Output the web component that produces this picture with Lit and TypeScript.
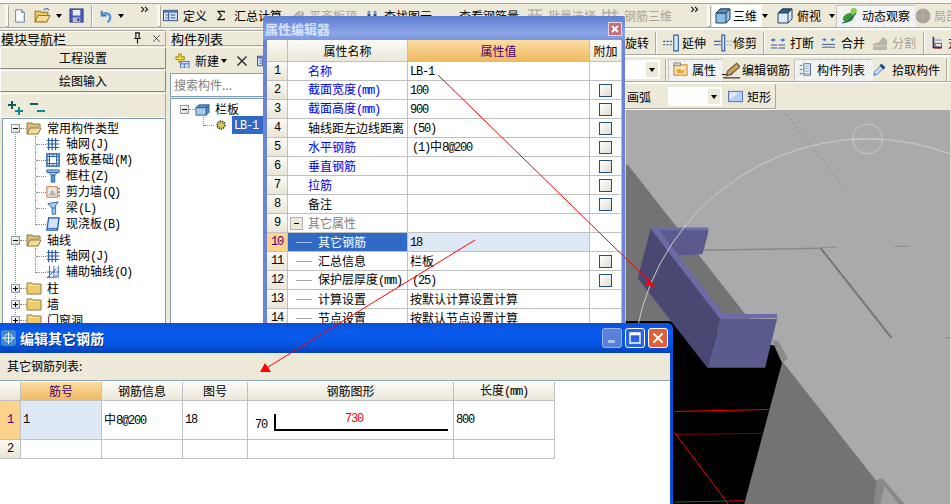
import { LitElement, html, css, svg } from 'lit';
import { customElement } from 'lit/decorators.js';

// icon drawings, 16x16 box unless stated
const paths: Record<string, unknown> = {
  doc: svg`<path d="M3 1h7l3 3v11H3z" fill="#fff" stroke="#5d7397"/><path d="M10 1v3h3" fill="#cfd8e6" stroke="#5d7397"/><path d="M4 14h8V7" stroke="#c4d0e2" fill="none"/>`,
  open: svg`<path d="M1 14V4h5l1 1h6v3" fill="#e8c468" stroke="#9c7a2c"/><path d="M1 14l3-6h11l-3 6z" fill="#f6dd96" stroke="#9c7a2c"/><path d="M9 3c2-2 4-2 5 0" stroke="#3a6cc0" fill="none"/>`,
  save: svg`<rect x="1" y="1" width="14" height="14" fill="#4a5fb8" stroke="#2b3a80"/><rect x="4" y="2" width="8" height="6" fill="#e8ecf8"/><rect x="4" y="10" width="8" height="5" fill="#b8bcc8"/><rect x="9" y="11" width="2" height="3" fill="#2b3a80"/>`,
  undo: svg`<path d="M4 3v5h5" fill="none" stroke="#2f72c8" stroke-width="2"/><path d="M4 8c3-4 9-3 9 2 0 2-1 4-3 5" fill="none" stroke="#4a90dc" stroke-width="2.4"/>`,
  table: svg`<rect x=".5" y="2.5" width="15" height="11" fill="#cfe0f5" stroke="#34507c"/><rect x="1" y="3" width="14" height="2" fill="#4a74b8"/><path d="M6 5v8M3 7.5h2M3 10.5h2M8 7.5h5M8 10.5h5" stroke="#34507c"/>`,
  sigma: svg`<path d="M12 4V2H3l5 6-5 6h9v-2" fill="none" stroke="#111" stroke-width="1.8"/>`,
  grayTag: svg`<path d="M2 11l7-7h5v5l-7 7z" fill="#bdb9aa" stroke="#9d998a"/><circle cx="12" cy="5" r="1" fill="#ece9d8"/>`,
  binoculars: svg`<path d="M2 14l1-9h3l1 9zM9 14l1-9h3l1 9z" fill="#2c4f90"/><rect x="7" y="8" width="2" height="3" fill="#2c4f90"/><rect x="3" y="2" width="3" height="3" fill="#7a94c0"/><rect x="10" y="2" width="3" height="3" fill="#7a94c0"/>`,
  glasses: svg`<path d="M1 13l3-4M15 13l-3-4" stroke="#444" fill="none"/><circle cx="5" cy="11" r="2" fill="none" stroke="#444"/><circle cx="11" cy="11" r="2" fill="none" stroke="#444"/>`,
  batch: svg`<path d="M1 2h14M1 7h14M5 2v13M10 2v7" stroke="#b4b1a4" fill="none" stroke-width="1.5"/><path d="M9 9l6 3-6 3z" fill="#c4c1b4"/>`,
  rebar: svg`<path d="M2 2v13M7 2v13M12 2v13M2 5h13M2 10h13" stroke="#b4b1a4" fill="none" stroke-width="1.5"/>`,
  cube: svg`<path d="M1 5l4-4h10v10l-4 4H1z" fill="#8cc0e4" stroke="#23405f"/><path d="M1 5h10v10M11 5l4-4" fill="none" stroke="#23405f"/><path d="M1 5l4-4h10l-4 4z" fill="#5d8fbc" stroke="#23405f"/>`,
  topCube: svg`<path d="M1 5l4-4h10v10l-4 4H1z" fill="#dbeaf5" stroke="#23405f"/><path d="M1 5l4-4h10l-4 4z" fill="#2a5f92" stroke="#23405f"/><path d="M11 5v10M11 5l4-4" fill="none" stroke="#23405f"/>`,
  orbit: svg`<ellipse cx="7" cy="10" rx="5.5" ry="4" fill="#3d9a30" transform="rotate(-30 7 10)"/><circle cx="12" cy="4" r="3" fill="#8ad040"/><path d="M1 15c4 0 9-4 13-9" stroke="#1a5c7a" fill="none"/>`,
  local: svg`<circle cx="8" cy="8" r="7.5" fill="#a8a598"/><path d="M8 1v14M1 8h14" stroke="#c4c1b4" stroke-dasharray="2 2"/>`,
  extend: svg`<path d="M10.5 1h4v14h-4z" stroke="#2c5fa8" fill="#dce8f8"/><path d="M1 6.5h8M1 9.5h8" stroke="#2c5fa8" stroke-dasharray="2 1"/>`,
  trim: svg`<path d="M7 1h2.5v14H7z" stroke="#2c5fa8" fill="#dce8f8"/><path d="M0 6.5h6M0 9.5h6" stroke="#2c5fa8"/><path d="M11 6.5h5M11 9.5h5" stroke="#9cb8dc" stroke-dasharray="2 1"/>`,
  breakIco: svg`<path d="M1 5l3-2v4zM15 5l-3-2v4z" fill="#3a78c8"/><path d="M1 5h5M10 5h5" stroke="#3a78c8"/><path d="M1 10h14M1 13h14" stroke="#3a5a90"/><path d="M8 9v5" stroke="#fff"/>`,
  merge: svg`<path d="M6 5L3 3v4zM10 5l3-2v4z" fill="#3a78c8"/><path d="M1 5h4M11 5h4" stroke="#3a78c8"/><path d="M1 10h14M1 13h14" stroke="#3a5a90"/>`,
  split: svg`<path d="M1 15V9l6-2 4-5 4 3v10z" fill="#b8b5a8"/><path d="M1 11h14" stroke="#d8d5c8"/>`,
  nextIco: svg`<path d="M3 1v13h10" stroke="#1a2f80" fill="none" stroke-width="2"/><path d="M5 5h8" stroke="#2c7fc8"/><rect x="5" y="9" width="8" height="6" fill="none" stroke="#b02020"/>`,
  props: svg`<rect x="1" y="3" width="14" height="11" fill="#fbe3b0" stroke="#c07a20"/><rect x="1" y="1" width="7" height="3" fill="#d8d4c0" stroke="#888"/><path d="M3 9l4-2 3 2 3-1-2 4H5z" fill="#e8a840"/>`,
  pencil: svg`<path d="M0 12h9" stroke="#222"/><path d="M4 13l1-4 8-7 3 3-8 7z" fill="#d8a050" stroke="#555"/><path d="M1 15h15" stroke="#222"/>`,
  list: svg`<rect x="6" y="1" width="8" height="14" fill="#fff" stroke="#34507c"/><path d="M7 4h6M7 7h6M7 10h6M7 13h6" stroke="#5d84c0"/><path d="M1 3h3M1 8h3M1 13h3" stroke="#34507c" stroke-width="2" stroke-dasharray="1 1"/>`,
  dropper: svg`<path d="M1 15l1-4 7-7 3 3-7 7z" fill="#cfe4f8" stroke="#2c5fa8"/><path d="M8 3l2-2 2 1 2 2 1 2-2 2z" fill="#1e4a9c"/>`,
  rect: svg`<rect x=".5" y="2.5" width="15" height="11" fill="#b8d0f4" stroke="#4a74b8"/><path d="M2 4h9L2 11z" fill="#e4eefc"/>`,
  newPlus: svg`<path d="M1 4h3V1h3v3h3v3H7v3H4V7H1z" fill="#f0d040" stroke="#a08820"/><rect x="6" y="9" width="9" height="7" fill="#cfdff5" stroke="#4a74b8"/><path d="M6 11.5h9M10 11.5v4" stroke="#4a74b8"/>`,
  cross: svg`<path d="M2 2l12 12M14 2L2 14" stroke="#333" stroke-width="2"/>`,
  plusPlus: svg`<path d="M4 1v8M0 5h8" stroke="#0d5e5e" stroke-width="2"/><path d="M11 7v8M7 11h8" stroke="#0d8a8a" stroke-width="2"/>`,
  minusMinus: svg`<path d="M0 4h8" stroke="#0d5e5e" stroke-width="2"/><path d="M7 11h8" stroke="#0d8a8a" stroke-width="2"/>`,
  folderOpen: svg`<path d="M1 14V3h5l1 1h7v3" fill="#d8bc78" stroke="#8a7850"/><path d="M1 14l3-6h11l-3 6z" fill="#f8dc98" stroke="#8a7850"/>`,
  folder: svg`<path d="M1 14V3h5l1 1h8v10z" fill="#f8dc80" stroke="#8a7850"/><path d="M2 6h12v7H2z" fill="#f0cc68"/>`,
  box3d: svg`<path d="M1 6h11v8H1z" fill="#a8cce8" stroke="#33608c"/><path d="M1 6l3-3h11l-3 3zM12 6l3-3v8l-3 3z" fill="#5d8fbc" stroke="#33608c"/>`,
  gear: svg`<circle cx="8" cy="8" r="5" fill="#f8e020" stroke="#444" stroke-width="2.4" stroke-dasharray="2 1"/><circle cx="8" cy="8" r="2" fill="#fff8a0" stroke="#886"/>`,
  grid: svg`<path d="M3 1v14M7 1v14M11 1v14M1 4h14M1 8h14M1 12h14" stroke="#2a5cb0" stroke-width="1.4"/>`,
  raft: svg`<rect x="1" y="1" width="14" height="14" fill="#dbe8f8" stroke="#1e5aa8" stroke-width="1.5"/><rect x="4" y="4" width="8" height="8" fill="#fff" stroke="#1e5aa8"/><path d="M1 4h3M1 8h3M1 12h3M12 4h3M12 8h3M12 12h3M4 1v3M8 1v3M12 1v3M4 12v3M8 12v3M12 12v3" stroke="#1e5aa8"/>`,
  column: svg`<path d="M1 1h14v3H1z" fill="#9cbce4" stroke="#1e5aa8"/><path d="M3 4h10L10 7H6z" fill="#c8dcf4" stroke="#1e5aa8"/><path d="M6 7h4v8H6z" fill="#5d8fd4" stroke="#1e5aa8"/>`,
  wall: svg`<rect x="1" y="2" width="12" height="12" fill="#ece8e0" stroke="#c86a30"/><path d="M3 12l4-7 5 7z" fill="#b8b4ac"/><path d="M15 3v2M15 7v2M15 11v2" stroke="#c86a30" stroke-width="2"/>`,
  beam: svg`<path d="M2 3l12-2-3 4v10H7V8z" fill="#a8ccf0" stroke="#1e5aa8"/><path d="M7 8h4" stroke="#1e5aa8"/>`,
  slab: svg`<path d="M3 1h12l-2 14H1z" fill="#cfe2f8" stroke="#1e5aa8" stroke-width="1.5"/><path d="M2 13h11" stroke="#1e5aa8"/>`,
  aux: svg`<path d="M4 1v14M9 1v14M14 1v14M1 8h14M1 14h14" stroke="#2a5cb0"/><path d="M1 15L12 4" stroke="#2a5cb0"/><rect x="10" y="11" width="5" height="4" fill="#9ab"/>`,
  pin: svg`<path d="M5 1h6M6 1v7M10 1v7M4 8h8M8 8v6" stroke="#111" fill="none" stroke-width="1.4"/>`,
  smallX: svg`<path d="M4 4l8 8M12 4l-8 8" stroke="#333"/>`,
  chev: svg`<path d="M2 3l4 4-4 4M8 3l4 4-4 4" fill="none" stroke="#111" stroke-width="1.8"/>`,
};

function ico(name: string, w = 16, h = w) {
  return html`<svg class="ico" width=${w} height=${h} viewBox="0 0 16 16">${paths[name]}</svg>`;
}

// latin runs get their own narrow face, as on the old bitmap font
function txt(s: string) {
  return s
    .split(/([\x21-\x7e]+)/)
    .map((part, i) => (i % 2 ? html`<span class="lat">${part}</span>` : part));
}

interface Tool {
  w: number;
  icon?: string;
  iw?: number;
  gap?: number;
  label?: string;
  kind?: 'caret' | 'chev' | 'sep' | 'grip' | 'press' | 'white';
  off?: boolean;
}

const row1: Tool[] = [
  { w: 13, kind: 'grip' },
  { w: 21, icon: 'doc', iw: 14 },
  { w: 22, icon: 'open', iw: 17 },
  { w: 13, kind: 'caret' },
  { w: 22, icon: 'save', iw: 15 },
  { w: 7, kind: 'sep' },
  { w: 20, icon: 'undo', iw: 15 },
  { w: 22, kind: 'caret' },
  { w: 12, kind: 'chev' },
  { w: 11, kind: 'grip' },
  { w: 53, icon: 'table', iw: 15, gap: 5, label: '定义' },
  { w: 73, icon: 'sigma', iw: 11, gap: 7, label: '汇总计算' },
  { w: 76, icon: 'grayTag', gap: 4, label: '平齐板顶', off: true },
  { w: 76, icon: 'binoculars', iw: 14, gap: 5, label: '查找图元' },
  { w: 86, icon: 'glasses', iw: 15, gap: 3, label: '查看钢筋量' },
  { w: 74, icon: 'batch', gap: 5, label: '批量选择', off: true },
  { w: 89, icon: 'rebar', iw: 18, gap: 5, label: '钢筋三维', off: true },
  { w: 12, kind: 'chev' },
  { w: 10, kind: 'grip' },
  { w: 50, icon: 'cube', gap: 2, label: '三维', kind: 'white' },
  { w: 10, kind: 'caret' },
  { w: 5 },
  { w: 52, icon: 'topCube', gap: 4, label: '俯视' },
  { w: 7, kind: 'caret' },
  { w: 79, icon: 'orbit', iw: 17, gap: 4, label: '动态观察', kind: 'press' },
  { w: 40, icon: 'local', gap: 3, label: '局部', off: true },
];

const row2: Tool[] = [
  { w: 30, label: '旋转' },
  { w: 7, kind: 'sep' },
  { w: 52, icon: 'extend', iw: 18, gap: 2, label: '延伸' },
  { w: 49, icon: 'trim', iw: 18, gap: 1, label: '修剪' },
  { w: 7, kind: 'sep' },
  { w: 51, icon: 'breakIco', gap: 4, label: '打断' },
  { w: 51, icon: 'merge', iw: 15, gap: 5, label: '合并' },
  { w: 51, icon: 'split', gap: 4, label: '分割', off: true },
  { w: 8, kind: 'sep' },
  { w: 40, icon: 'nextIco', iw: 13, gap: 4, label: '对齐' },
];

const row3: Tool[] = [
  { w: 54, icon: 'props', iw: 15, gap: 4, label: '属性', kind: 'press' },
  { w: 72, icon: 'pencil', iw: 18, gap: 2, label: '编辑钢筋' },
  { w: 79, icon: 'list', iw: 13, gap: 5, label: '构件列表', kind: 'press' },
  { w: 73, icon: 'dropper', iw: 13, gap: 6, label: '拾取构件' },
  { w: 5, kind: 'sep' },
];

const tree = [
  { t: '常用构件类型', folder: 'folderOpen', exp: 'minus' },
  { t: '轴网(J)', icon: 'grid' },
  { t: '筏板基础(M)', icon: 'raft' },
  { t: '框柱(Z)', icon: 'column' },
  { t: '剪力墙(Q)', icon: 'wall' },
  { t: '梁(L)', icon: 'beam' },
  { t: '现浇板(B)', icon: 'slab', last: true },
  { t: '轴线', folder: 'folderOpen', exp: 'minus' },
  { t: '轴网(J)', icon: 'grid' },
  { t: '辅助轴线(O)', icon: 'aux', last: true },
  { t: '柱', folder: 'folder', exp: 'plus' },
  { t: '墙', folder: 'folder', exp: 'plus' },
  { t: '门窗洞', folder: 'folder', exp: 'plus' },
];

const props = [
  { n: '名称', v: 'LB-1', link: true },
  { n: '截面宽度(mm)', v: '100', link: true, c: true },
  { n: '截面高度(mm)', v: '900', link: true, c: true },
  { n: '轴线距左边线距离', v: '(50)', c: true, pad: true },
  { n: '水平钢筋', v: '(1)中8@200', link: true, c: true, pad: true },
  { n: '垂直钢筋', v: '', link: true, c: true },
  { n: '拉筋', v: '', link: true, c: true },
  { n: '备注', v: '', c: true },
  { n: '其它属性', v: '', group: true },
  { n: '其它钢筋', v: '18', sub: true, sel: true },
  { n: '汇总信息', v: '栏板', sub: true, c: true },
  { n: '保护层厚度(mm)', v: '(25)', sub: true, c: true, pad: true },
  { n: '计算设置', v: '按默认计算设置计算', sub: true },
  { n: '节点设置', v: '按默认节点设置计算', sub: true },
];

@customElement('app-root')
export class AppRoot extends LitElement {
  static styles = css`
    :host {
      display: block;
      position: relative;
      width: 951px;
      height: 504px;
      overflow: hidden;
      background: #ece9d8;
      color: #000;
      font: 12px/16px "Noto Sans CJK SC", "Liberation Sans", sans-serif;
    }
    .ico { flex: none; display: block; }
    .lat { font-family: "Liberation Mono", monospace; font-size: 12px; letter-spacing: -1.2px; }

    /* toolbars */
    .bar {
      display: flex;
      align-items: center;
      box-sizing: border-box;
      height: 29px;
      border-top: 3px solid #f8f7f0;
      border-bottom: 1px solid #fff;
      box-shadow: inset 0 1px 0 #aca899, inset 0 -1px 0 #aca899;
      white-space: nowrap;
      overflow: hidden;
    }
    .bar.sub { height: 27px; border-top: 1px solid #fff; box-shadow: inset 0 -1px 0 #aca899; }
    .tool { display: flex; align-items: center; flex: none; box-sizing: border-box; height: 22px; }
    .tool.off { color: #a8a598; }
    .tool.white { background: #fff; padding-left: 3px; }
    .tool.press {
      background: repeating-conic-gradient(#fff 0 25%, #ece9d8 0 50%) 0 0 / 2px 2px;
      padding-left: 5px;
      box-shadow: inset 1px 1px 0 #c8c5b8;
    }
    .caret::before {
      content: "";
      display: block;
      border: 3px solid transparent;
      border-top: 4px solid #000;
      border-bottom: 0;
    }
    .tool.chev { align-items: flex-start; }
    .sep { justify-content: flex-start; }
    .sep::before { content: ""; width: 1px; height: 22px; background: #aca899; box-shadow: 1px 0 0 #fff; }
    .grip::before {
      content: "";
      width: 3px;
      height: 21px;
      margin-left: 5px;
      background: #f8f7f0;
      box-shadow: 1px 1px 0 #aca899;
    }

    /* layout under the first toolbar */
    .body { display: grid; grid-template-columns: 168px 457px 326px; height: 475px; }
    .head {
      box-sizing: border-box;
      display: flex;
      align-items: center;
      height: 15px;
      margin: 2px 0 1px;
      border: 1px solid #aca899;
      border-top-color: #fff;
      border-left-color: #fff;
      box-shadow: 0 -1px 0 #aca899;
      font-size: 13px;
    }
    .head .title { flex: 1; }
    .nav { padding: 0 2px 0 0; }
    .navbtn {
      box-sizing: border-box;
      height: 22px;
      margin-bottom: 1px;
      text-align: center;
      line-height: 20px;
      border: 1px solid;
      border-color: #fff #8c8977 #8c8977 #fff;
      background: #ece9d8;
    }
    .expander { display: flex; gap: 6px; height: 25px; padding: 6px 0 0 7px; box-sizing: border-box; border: 1px solid #fff; border-right-color: #aca899; }
    .tree {
      position: relative;
      box-sizing: border-box;
      height: 220px;
      margin-left: 2px;
      border: 1px solid #7f9db9;
      background: #fff;
      padding-top: 1px;
      overflow: hidden;
    }
    .tree::before {
      content: "";
      position: absolute;
      left: 12px;
      top: 10px;
      bottom: 0;
      border-left: 1px dotted #888;
    }
    .node { display: flex; align-items: center; height: 16px; white-space: nowrap; }
    .box {
      position: relative;
      box-sizing: border-box;
      width: 9px;
      height: 9px;
      border: 1px solid #8a9cb0;
      background: linear-gradient(135deg, #fff, #d8d4c4);
      margin-left: 8px;
      flex: none;
    }
    .box.minus::after, .box.plus::after {
      content: "";
      position: absolute;
      left: 1px;
      top: 3px;
      width: 5px;
      height: 1px;
      background: #000;
    }
    .box.plus::before {
      content: "";
      position: absolute;
      left: 3px;
      top: 1px;
      width: 1px;
      height: 5px;
      background: #000;
    }
    .dots { width: 6px; height: 0; border-top: 1px dotted #888; flex: none; }
    .conn {
      position: relative;
      box-sizing: border-box;
      width: 11px;
      height: 16px;
      margin-left: 32px;
      border-left: 1px dotted #888;
      flex: none;
    }
    .conn::after { content: ""; position: absolute; left: 0; top: 8px; width: 10px; border-top: 1px dotted #888; }
    .conn.tail { height: 9px; align-self: flex-start; }
    .conn.leaf { width: 12px; margin-left: 31px; }
    .node .lab { margin-left: 5px; }
    .node .lab1 { margin-left: 6px; }

    .list { padding-left: 2px; }
    .listbar { display: flex; align-items: center; height: 26px; padding-left: 5px; border-top: 1px solid #fff; box-sizing: border-box; overflow: hidden; }
    .search {
      box-sizing: border-box;
      height: 24px;
      margin-bottom: 1px;
      border: 1px solid #7f9db9;
      background: #fff;
      color: #808080;
      padding: 3px 0 0 3px;
    }
    .listtree { position: relative; height: 226px; box-sizing: border-box; border: 1px solid #7f9db9; background: #fff; padding: 2px 0 0 1px; }
    .sel { background: #316ac5; color: #fff; padding: 0 10px 0 2px; margin-left: 5px; }

    .main { display: flex; flex-direction: column; overflow: hidden; }
    .main .bar.sub { width: 326px; padding: 0; }
    .drop { display: flex; align-items: center; justify-content: flex-end; box-sizing: border-box; height: 19px; background: #fff; padding-right: 2px; flex: none; }
    .drop .caret { width: 12px; height: 15px; display: flex; align-items: center; justify-content: center; background: #ece9d8; }
    .main .bar.sub.end { width: 151px; box-shadow: inset -1px -1px 0 #aca899; }
    .view { flex: 1; display: block; }

    /* floating windows */
    .prop {
      position: absolute;
      left: 263px;
      top: 16px;
      width: 362px;
      height: 320px;
      box-sizing: border-box;
      background: #6c84d8;
      border-radius: 3px 3px 0 0;
      padding: 0 3px 0 4px;
    }
    .prop-title {
      display: flex;
      align-items: center;
      justify-content: space-between;
      height: 24px;
      margin: 0 -3px 0 -4px;
      padding: 1px 3px 0 2px;
      border-radius: 3px 3px 0 0;
      box-sizing: border-box;
      background: linear-gradient(#5f7ed0, #8aa4e6 70%, #7c96de);
      color: #d6e3fa;
      font-size: 13px;
      font-weight: bold;
    }
    .prop-close {
      width: 12px;
      height: 12px;
      background: #c86a7c;
      border: 1px solid #e8d8e0;
      display: flex;
      align-items: center;
      justify-content: center;
    }
    .grid { background: #fff; }
    .prow { display: grid; grid-template-columns: 21px 120px 182px 32px; height: 19px; box-sizing: border-box; }
    .prow.hd { height: 22px; }
    .prow > div {
      box-sizing: border-box;
      border-right: 1px solid #c0c0c0;
      border-bottom: 1px solid #c0c0c0;
      display: flex;
      align-items: center;
      overflow: hidden;
      white-space: nowrap;
    }
    .rh { justify-content: center; background: linear-gradient(#fbfaf5, #e9e6d6); }
    .hdc { justify-content: center; background: linear-gradient(#fbfaf5, #ebe8da); }
    .hdc.on { background: linear-gradient(#fbdda5, #f0ba60); color: #4b0072; }
    .rh.on { background: #fdd28a; color: #4b0072; }
    .n { padding-left: 20px; }
    .n.link { color: #0000f0; }
    .n.group { color: #808080; padding-left: 2px; gap: 5px; }
    .n.sub { padding-left: 8px; }
    .n.sub::before { content: ""; width: 16px; height: 1px; background: #a8a8a8; margin-right: 6px; flex: none; }
    .n.sub.on { background: #316ac5; color: #fff; }
    .n.sub.on::before { background: #a8c0e8; }
    .group .box { margin-left: 0; width: 13px; height: 13px; border-color: #b0b0b0; background: #ece9d8; }
    .group .box.minus::after { left: 3px; top: 5px; width: 5px; }
    .v { padding-left: 2px; }
    .v.pad { padding-left: 4px; }
    .v.on { background: #dfe8f5; }
    .a { justify-content: center; }
    .chk {
      box-sizing: border-box;
      width: 13px;
      height: 13px;
      border: 1px solid #1c5180;
      background: linear-gradient(135deg, #fff, #dedcd0);
    }

    .dlg {
      position: absolute;
      left: 0;
      top: 323px;
      width: 673px;
      height: 181px;
      box-sizing: border-box;
      display: flex;
      flex-direction: column;
      padding-right: 3px;
      background: #0a50d8;
      border-radius: 0 6px 0 0;
    }
    .dlg-title {
      display: flex;
      align-items: center;
      flex: none;
      height: 30px;
      margin-right: -3px;
      padding: 0 5px 0 1px;
      border-radius: 0 6px 0 0;
      background: linear-gradient(#0a50d8, #0a5cee 30%, #0656e4 70%, #0240b8);
      color: #fff;
      font-size: 14px;
      font-weight: bold;
      text-shadow: 1px 1px 0 #0a2a80;
    }
    .dlg-title .name { flex: 1; margin-left: 4px; }
    .wbtn {
      box-sizing: border-box;
      width: 20px;
      height: 20px;
      margin-left: 3px;
      border: 1px solid #fff;
      border-radius: 3px;
      display: flex;
      align-items: center;
      justify-content: center;
    }
    .wbtn.min { background: #5a80dc; border-color: #9cb8ec; }
    .wbtn.max { background: #2a62e4; }
    .wbtn.close { background: #e0603a; }
    .dlg-lab { flex: none; height: 27px; line-height: 26px; padding-left: 7px; background: #ece9d8; box-sizing: border-box; }
    .dlg-white { flex: 1; background: #fff; border-top: 1px solid #8fa8b8; padding-top: 1px; }
    .drow { display: grid; grid-template-columns: 21px 81px 81px 65px 206px 101px; width: 555px; }
    .drow > div {
      box-sizing: border-box;
      border-right: 1px solid #c0c0c0;
      border-bottom: 1px solid #c0c0c0;
      display: flex;
      align-items: center;
      padding-left: 2px;
      overflow: hidden;
    }
    .drow.hd > div { height: 19px; padding: 0; justify-content: center; }
    .drow.r1 > div { height: 39px; }
    .drow.r2 > div { height: 19px; }
    .drow > .rh { padding: 0; }
    .drow .sel1 { background: #dfe8f5; }
    .drow .shape { padding: 0; }
    .shape text { font: 12px "Liberation Mono", monospace; letter-spacing: -1.2px; }

    .arrows { position: absolute; left: 0; top: 0; pointer-events: none; }
  `;

  tool(t: Tool) {
    const cls = ['tool', t.kind ?? '', t.off ? 'off' : ''].join(' ');
    const wide = t.w + 'px';
    if (t.kind === 'caret') {
      return html`<div class="tool caret" style="width:${wide}"></div>`;
    }
    if (t.kind === 'chev') return html`<div class="tool chev" style="width:${wide}">${ico('chev', 10)}</div>`;
    return html`<div class=${cls} style="width:${wide};gap:${t.gap ?? 0}px">
      ${t.icon ? ico(t.icon, t.iw ?? 16) : ''}${t.label ?? ''}
    </div>`;
  }

  scene() {
    return html`<svg class="view" width="326" height="396" viewBox="625 108 326 396">
      <rect x="625" y="108" width="326" height="396" fill="#aaaaaa" />
      <path d="M627 163L895 504H625V163z" fill="#737373" />
      <path d="M668 320L775 345L782 362L744 504H625V320z" fill="#000" />
      <path d="M772 340L778 340L788 358L782 362z" fill="#8a8a8a" />
      <path d="M877 480L883 478L905 504H874z" fill="#888" />
      <path d="M881 504L885 486L899 504z" fill="#a0a0a0" />
      <path d="M703 249L821 247" stroke="#888" stroke-width="1.6" />
      <path d="M821 246H836M895 245H910M946 337H951" stroke="#8a8a8a" />
      <path d="M821 247L892 337" stroke="#777" stroke-width="2" />
      <path d="M787 113L843 185" stroke="#666" stroke-dasharray="1 4" />
      <path d="M674 411L769 409" stroke="#f00" />
      <path d="M674 434L763 433" stroke="#800000" />
      <path d="M674 432L728 504" stroke="#f00" />
      <path d="M674 502L728 501" stroke="#008000" />
      <path d="M728 501H744" stroke="#f00" />

      <path d="M657 228H708L707 235L702 253L677 254z" fill="#5a5a8c" />
      <path d="M650 226H708V229H657z" fill="#6c6ba8" />
      <path d="M720 318H777L765 367H707z" fill="#5a5a8c" />
      <path d="M723 313H777V317L720 318z" fill="#6c6ba8" />
      <path d="M650 227L720 318L707 367L637 277z" fill="#4a4872" />
      <path d="M650 227L657 227L723 313L720 318z" fill="#6c6ba8" />

      <circle cx="868" cy="373" r="236" fill="none" stroke="#cccccc" />
      <circle cx="868" cy="137" r="15" fill="none" stroke="#c8c8c8" />
      <path d="M853 137H883" stroke="#c8c8c8" />
    </svg>`;
  }

  render() {
    return html`
      <div class="bar">${row1.map((t) => this.tool(t))}</div>
      <div class="body">
        <div class="nav">
          <div class="head"><span class="title">模块导航栏</span>${ico('pin', 13)}<span style="width:6px"></span>${ico('smallX', 13)}<span style="width:2px"></span></div>
          <div class="navbtn">工程设置</div>
          <div class="navbtn">绘图输入</div>
          <div class="expander">${ico('plusPlus', 16)}${ico('minusMinus', 16)}</div>
          <div class="tree">
            ${tree.map((n) =>
              n.folder
                ? html`<div class="node">
                    <span class=${'box ' + n.exp}></span><span class="dots"></span>${ico(n.folder, 16)}
                    <span class="lab">${n.t}</span>
                  </div>`
                : html`<div class="node">
                    <span class=${n.last ? 'conn tail' : 'conn'}></span>${ico(n.icon!, 14)}
                    <span class="lab1">${txt(n.t)}</span>
                  </div>`
            )}
          </div>
        </div>

        <div class="list">
          <div class="head"><span class="title">构件列表</span></div>
          <div class="listbar">
            ${ico('newPlus', 15)}<span style="margin-left:5px">新建</span>
            <div class="tool caret" style="width:12px;margin-left:2px"></div>
            <span style="width:3px"></span>${ico('cross', 12)}<span style="width:9px"></span>${ico('table', 14)}
          </div>
          <div class="search">搜索构件...</div>
          <div class="listtree">
            <div class="node">
              <span class="box minus"></span><span class="dots"></span>${ico('box3d', 15)}
              <span class="lab">栏板</span>
            </div>
            <div class="node">
              <span class="conn tail leaf"></span>${ico('gear', 12)}
              <span class="sel">${txt('LB-1')}</span>
            </div>
          </div>
        </div>

        <div class="main">
          <div class="bar sub">${row2.map((t) => this.tool(t))}</div>
          <div class="bar sub">
            <div class="drop" style="width:35px"><div class="caret"></div></div>
            <div class="tool sep" style="width:3px;margin-left:5px"></div>
            ${row3.map((t) => this.tool(t))}
          </div>
          <div class="bar sub end">
            <div class="tool" style="width:43px;padding-left:2px">画弧</div>
            <div class="drop" style="width:54px"><div class="caret"></div></div>
            <div class="tool" style="width:6px"></div>
            ${this.tool({ w: 46, icon: 'rect', iw: 15, gap: 4, label: '矩形' })}
          </div>
          ${this.scene()}
        </div>
      </div>

      <div class="prop">
        <div class="prop-title">
          <span>属性编辑器</span>
          <span class="prop-close">
            <svg width="10" height="10" viewBox="0 0 10 10"><path d="M2 2l6 6M8 2l-6 6" stroke="#fff" stroke-width="2" /></svg>
          </span>
        </div>
        <div class="grid">
          <div class="prow hd">
            <div class="rh"></div>
            <div class="hdc">属性名称</div>
            <div class="hdc on">属性值</div>
            <div class="hdc">附加</div>
          </div>
          ${props.map(
            (p, i) => html`<div class="prow">
              <div class=${p.sel ? 'rh on' : 'rh'}><span class="lat">${i + 1}</span></div>
              <div class="n ${p.link ? 'link' : ''} ${p.group ? 'group' : ''} ${p.sub ? 'sub' : ''} ${p.sel ? 'on' : ''}">
                ${p.group ? html`<span class="box minus"></span>` : ''}<span>${txt(p.n)}</span>
              </div>
              <div class="v ${p.pad ? 'pad' : ''} ${p.sel ? 'on' : ''}"><span>${txt(p.v)}</span></div>
              <div class="a">${p.c ? html`<span class="chk"></span>` : ''}</div>
            </div>`
          )}
        </div>
      </div>

      <div class="dlg">
        <div class="dlg-title">
          <svg width="15" height="16" viewBox="0 0 15 16">
            <rect width="15" height="16" rx="3" fill="#3e8ac8" />
            <circle cx="7.5" cy="8" r="4" fill="none" stroke="#cfe6f5" />
            <path d="M7.5 2v12M1 8h13" stroke="#e8f4fa" />
          </svg>
          <span class="name">编辑其它钢筋</span>
          <span class="wbtn min"><svg width="12" height="12" viewBox="0 0 12 12"><rect x="2" y="8" width="7" height="3" fill="#a8c0f0" /></svg></span>
          <span class="wbtn max"><svg width="12" height="12" viewBox="0 0 12 12"><path d="M1 1h10v10H1zM1 2.5h10" fill="none" stroke="#fff" stroke-width="1.4" /></svg></span>
          <span class="wbtn close"><svg width="12" height="12" viewBox="0 0 12 12"><path d="M1.5 1.5l9 9M10.5 1.5l-9 9" stroke="#fff" stroke-width="2" /></svg></span>
        </div>
        <div class="dlg-lab">其它钢筋列表:</div>
        <div class="dlg-white">
          <div class="drow hd">
            <div class="rh"></div>
            <div class="hdc on">筋号</div>
            <div class="hdc">钢筋信息</div>
            <div class="hdc">图号</div>
            <div class="hdc">钢筋图形</div>
            <div class="hdc"><span>${txt('长度(mm)')}</span></div>
          </div>
          <div class="drow r1">
            <div class="rh on"><span class="lat">1</span></div>
            <div class="sel1"><span class="lat">1</span></div>
            <div><span>${txt('中8@200')}</span></div>
            <div><span class="lat">18</span></div>
            <div class="shape">
              <svg width="205" height="38" viewBox="0 0 205 38">
                <text x="7" y="27">70</text>
                <text x="97" y="21" fill="#f00">730</text>
                <path d="M27 13V29H200" fill="none" stroke="#000" stroke-width="2" />
              </svg>
            </div>
            <div><span class="lat">800</span></div>
          </div>
          <div class="drow r2">
            <div class="rh"><span class="lat">2</span></div><div></div><div></div><div></div><div></div><div></div>
          </div>
        </div>
      </div>

      <svg class="arrows" width="951" height="504" viewBox="0 0 951 504">
        <path d="M438 75L650 282" stroke="#f00" fill="none" />
        <path d="M655 287L648 278L646 285z" fill="#f00" />
        <path d="M475 240L268 367" stroke="#f00" fill="none" />
        <path d="M260 372L265 363L271 372z" fill="#f00" />
      </svg>
    `;
  }
}
